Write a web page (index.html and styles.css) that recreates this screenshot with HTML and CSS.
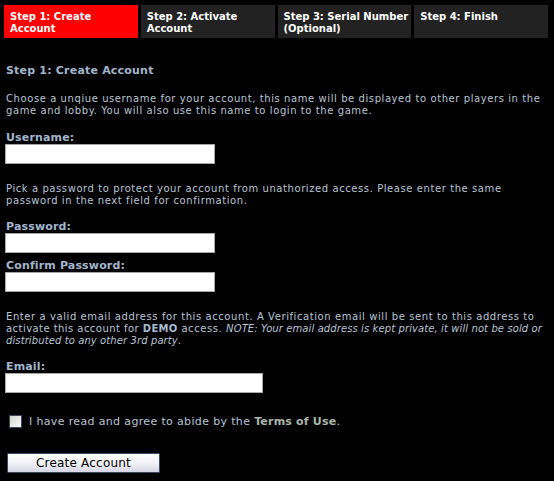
FILE: index.html
```html
<!DOCTYPE html>
<html>
<head>
<meta charset="utf-8">
<link rel="stylesheet" href="styles.css">
</head>
<body>
<div class="page">
  <nav class="tabs">
    <div class="tab active">Step 1: Create Account</div>
    <div class="tab">Step 2: Activate Account</div>
    <div class="tab">Step 3: Serial Number (Optional)</div>
    <div class="tab">Step 4: Finish</div>
  </nav>
  <div class="content">
    <h1 class="heading">Step 1: Create Account</h1>
    <p class="info first">Choose a unqiue username for your account, this name will be displayed to other players in the<br>game and lobby. You will also use this name to login to the game.</p>
    <label class="label top">Username:</label>
    <div class="field short"></div>
    <p class="info">Pick a password to protect your account from unathorized access. Please enter the same<br>password in the next field for confirmation.</p>
    <label class="label">Password:</label>
    <div class="field short"></div>
    <label class="label spaced">Confirm Password:</label>
    <div class="field short"></div>
    <p class="info">Enter a valid email address for this account. A Verification email will be sent to this address to<br><span class="tight">activate this account for</span> <b>DEMO</b> access. <i>NOTE: Your email address is kept private, it will not be sold or<br>distributed to any other 3rd party</i>.</p>
    <label class="label">Email:</label>
    <div class="field long"></div>
    <div class="agree">
      <span class="check"></span>
      <span class="agree-text">I have read and agree to abide by the <b>Terms of Use</b>.</span>
    </div>
    <div class="button">Create Account</div>
  </div>
</div>
</body>
</html>
```
FILE: styles.css
```css
html, body {
  margin: 0;
  padding: 0;
  background: #000;
}
body {
  font-family: "DejaVu Sans", Verdana, sans-serif;
  font-size: 10px;
  color: #b9c5d4;
}
.page {
  padding: 5px 0 0 4px;
}
.tabs {
  display: grid;
  grid-template-columns: repeat(4, 1fr);
  column-gap: 3px;
  width: 544px;
}
.tab {
  height: 33px;
  box-sizing: border-box;
  padding: 6px 2px 0 6px;
  background: #222222;
  color: #ffffff;
  font-weight: bold;
  font-size: 10px;
  line-height: 12px;
}
.tab.active {
  background: #ff0000;
}
.content {
  display: flex;
  flex-direction: column;
  align-items: flex-start;
  padding: 0 0 0 1px;
  width: 548px;
}
.heading {
  margin: 26px 0 0 1px;
  font-size: 11px;
  line-height: 13px;
  font-weight: bold;
  letter-spacing: 0.2px;
  color: #a3b6cc;
}
.info {
  margin: 19px 0 0 1px;
  font-size: 10px;
  line-height: 12px;
  letter-spacing: 0.58px;
  white-space: nowrap;
  color: #b9c5d4;
}
.info.first {
  margin-top: 16px;
}
.info b {
  color: #a9bbd0;
  letter-spacing: 0.3px;
}
.info i {
  letter-spacing: 0.1px;
}
.info .tight {
  letter-spacing: 0.45px;
}
.label {
  margin: 13px 0 0 1px;
  font-size: 11px;
  line-height: 13px;
  font-weight: bold;
  letter-spacing: 0.15px;
  color: #a3b6cc;
}
.label.top {
  margin-top: 14px;
}
.label.spaced {
  margin-top: 6px;
}
.field {
  height: 20px;
  box-sizing: border-box;
  border: 1px solid #a8a8a8;
  background: #ffffff;
}
.field.short {
  width: 210px;
}
.field.long {
  width: 258px;
}
.agree {
  display: flex;
  align-items: center;
  gap: 7px;
  margin: 22px 0 0 4px;
}
.check {
  width: 13px;
  height: 13px;
  box-sizing: border-box;
  border: 1px solid #3a4a5e;
  background: linear-gradient(135deg, #d6d6d2, #f8f8f6);
}
.agree-text {
  font-size: 11px;
  line-height: 13px;
  letter-spacing: 0.35px;
  color: #b9c5d4;
}
.agree-text b {
  color: #aab6aa;
  letter-spacing: 0.2px;
}
.button {
  margin: 25px 0 0 2px;
  width: 153px;
  height: 20px;
  box-sizing: border-box;
  border: 1px solid #3c4a66;
  border-radius: 1px;
  background: linear-gradient(#ffffff, #f2f2f8 50%, #d6d6e6);
  color: #000;
  font-size: 12px;
  line-height: 18px;
  letter-spacing: 0.2px;
  text-align: center;
}
```
